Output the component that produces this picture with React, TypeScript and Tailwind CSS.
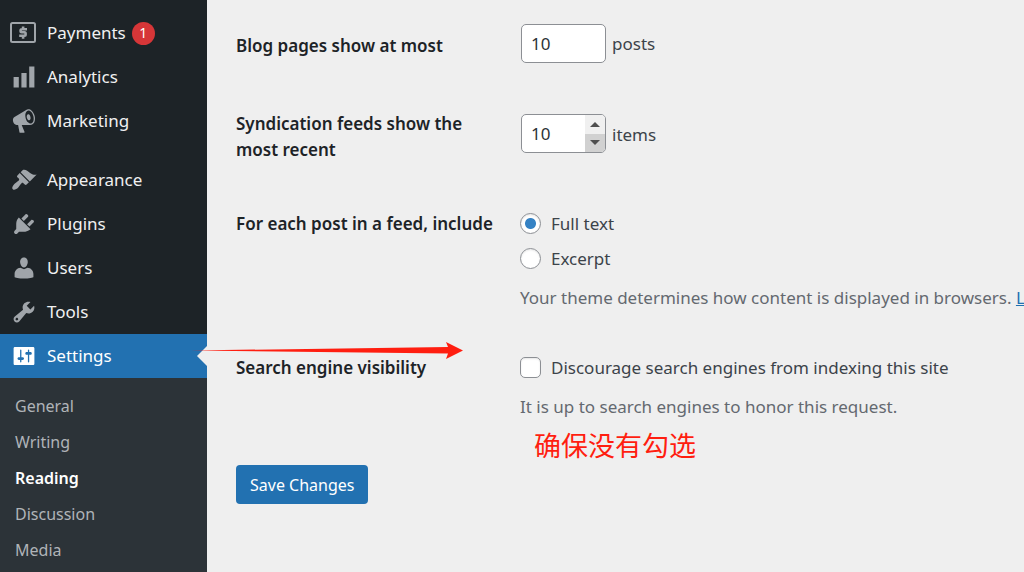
import { useState } from "react";
import type { ReactNode } from "react";

const ICONS = {
  analytics: "M18 18V2h-4v16h4zm-6 0V7H8v11h4zm-6 0v-8H2v8h4z",
  marketing:
    "M18.15 5.94c.46 1.62.38 3.22-.02 4.48-.42 1.28-1.26 2.18-2.3 2.48-.16.06-.26.06-.4.06-.06.02-.12.02-.18.02-.06.02-.14.02-.22.02h-6.8l2.22 5.5c.02.14-.06.26-.14.34-.08.1-.24.16-.34.16H6.95c-.1 0-.26-.06-.34-.16-.08-.08-.16-.2-.14-.34l-1-5.5H4.25l-.02-.02c-.5.06-1.08-.18-1.54-.62s-.88-1.08-1.06-1.88c-.24-.8-.2-1.56-.02-2.2.18-.62.58-1.08 1.06-1.3l.02-.02 9-5.4c.1-.06.18-.1.24-.16.06-.04.14-.08.24-.12.16-.08.28-.12.5-.18 1.04-.3 2.24.1 3.22.98s1.84 2.24 2.26 3.86zm-2.58 5.98h-.02c.4-.1.74-.34 1.04-.7.58-.7.86-1.76.86-3.04 0-.64-.1-1.3-.28-1.98-.34-1.36-1.02-2.5-1.78-3.24s-1.68-1.1-2.46-.88c-.82.22-1.4.96-1.7 2-.32 1.04-.28 2.36.06 3.72.38 1.36 1 2.5 1.8 3.24.78.74 1.62 1.1 2.48.88zm-2.54-7.08c.22-.04.42-.02.62.04.38.16.76.48 1.02 1s.42 1.2.42 1.78c0 .3-.04.56-.12.8-.18.48-.44.84-.86.94-.34.1-.8-.06-1.14-.4s-.64-.86-.78-1.5c-.18-.62-.12-1.24.02-1.72s.48-.84.82-.94z",
  appearance:
    "M14.48 11.06L7.41 3.99l1.5-1.5c.5-.56 2.3-.47 3.51.32 1.21.8 1.43 1.28 2.91 2.1 1.18.64 2.45 1.26 4.45.85zm-.71.71L6.7 4.7 4.93 6.47c-.39.39-.39 1.02 0 1.41l1.06 1.06c.39.39.39 1.03 0 1.42-.6.6-1.43 1.11-2.21 1.69-.35.26-.7.53-1.01.84C1.43 14.23.4 16.08 1.4 17.07c.99 1 2.84-.03 4.18-1.36.31-.31.58-.66.85-1.02.57-.78 1.08-1.61 1.69-2.21.39-.39 1.02-.39 1.41 0l1.06 1.06c.39.39 1.02.39 1.41 0z",
  plugins:
    "M13.11 4.36L9.87 7.6 8 5.73l3.24-3.24c.35-.34 1.05-.2 1.56.32.52.51.66 1.21.31 1.55zm-8 1.77l.91-1.12 9.01 9.01-1.19.84c-.71.71-2.63 1.16-3.82 1.16H6.14L4.9 17.26c-.59.59-1.54.59-2.12 0-.59-.58-.59-1.53 0-2.12l1.24-1.24v-3.88c0-1.13.4-3.19 1.09-3.89zm7.26 3.97l3.24-3.24c.34-.35 1.04-.21 1.55.31.52.51.66 1.21.31 1.55l-3.24 3.25z",
  users:
    "M10 9.700c-2.270 0-2.930-3.700-2.930-3.700C6.800 4.020 7.700 2 9.970 2c2.260 0 3.180 2.020 2.910 4 0 0-.61 3.700-2.880 3.700zm0 1.300L12.720 9.800c2.390 0 4.520 2.330 4.520 4.730v2.490s-3.650 1.130-7.240 1.130c-3.650 0-7.240-1.130-7.240-1.130v-2.490c0-2.250 1.940-4.730 4.470-4.730z",
  tools:
    "M16.68 9.77c-1.34 1.34-3.3 1.67-4.95.99l-5.41 6.52c-.99.99-2.59.99-3.58 0s-.99-2.59 0-3.57l6.52-5.42c-.68-1.65-.35-3.61.99-4.95 1.28-1.28 3.12-1.62 4.72-1.06l-2.89 2.89 2.82 2.82 2.86-2.87c.53 1.58.18 3.39-1.08 4.65zM3.81 16.21c.4.39 1.04.39 1.43 0 .4-.4.4-1.04 0-1.43-.39-.4-1.03-.4-1.43 0-.39.39-.39 1.03 0 1.43z",
  settings:
    "M18 16V4c0-.55-.45-1-1-1H3c-.55 0-1 .45-1 1v12c0 .55.45 1 1 1h14c.55 0 1-.45 1-1zM8 11h1c.55 0 1 .45 1 1s-.45 1-1 1H8v1.5c0 .28-.22.5-.5.5s-.5-.22-.5-.5V13H6c-.55 0-1-.45-1-1s.45-1 1-1h1V5.5c0-.28.22-.5.5-.5s.5.22.5.5V11zm5-2h-1c-.55 0-1-.45-1-1s.45-1 1-1h1V5.5c0-.28.22-.5.5-.5s.5.22.5.5V7h1c.55 0 1 .45 1 1s-.45 1-1 1h-1v5.5c0 .28-.22.5-.5.5s-.5-.22-.5-.5V9z",
};

function Icon({ name }: { name: keyof typeof ICONS }) {
  return (
    <svg viewBox="0 0 20 20" className="size-[26px] shrink-0" fill="currentColor" aria-hidden="true">
      <path d={ICONS[name]} />
    </svg>
  );
}

function PaymentsIcon() {
  return (
    <svg viewBox="1 0 26 26" className="size-[26px] shrink-0 overflow-visible" fill="none" stroke="currentColor" aria-hidden="true">
      <rect x="1" y="3" width="24" height="19" rx="1.5" strokeWidth="2" />
      <path d="M17 9.200h-5.200a1.200 1.200 0 0 0-1.200 1.200v.7a1.200 1.200 0 0 0 1.200 1.200h2.600a1.200 1.200 0 0 1 1.200 1.200v1a1.200 1.200 0 0 1-1.200 1.200H9.200M13.100 6.400v2.500M13.100 16v2.700" strokeWidth="2.600" />
    </svg>
  );
}

function MenuItem({ icon, label, active, badge }: { icon: ReactNode; label: string; active?: boolean; badge?: string }) {
  return (
    <li>
      <a
        href="#"
        aria-current={active ? "true" : undefined}
        className={
          active
            ? "relative flex h-11 items-center gap-[10px] bg-[#2271b1] pl-[11px] text-white"
            : "flex h-11 items-center gap-[10px] pl-[11px] text-[#f0f0f1]"
        }
      >
        <span className={active ? "text-white" : "text-[#a0a5aa]"}>{icon}</span>
        <span>{label}</span>
        {badge && (
          <span className="-ml-1 flex size-[23px] items-center justify-center rounded-full bg-[#d63638] text-sm text-white">
            {badge}
          </span>
        )}
        {active && (
          <svg viewBox="0 0 10 20" className="absolute top-3 right-0 h-5 w-[10px]" aria-hidden="true">
            <path d="M10 0v20L0 10z" fill="#efefef" />
          </svg>
        )}
      </a>
    </li>
  );
}

function Sidebar() {
  const pages = ["General", "Writing", "Reading", "Discussion", "Media"];
  return (
    <nav aria-label="Main menu" className="flex w-[207px] shrink-0 flex-col bg-[#1d2327] pt-[11px]">
      <ul>
        <MenuItem icon={<PaymentsIcon />} label="Payments" badge="1" />
        <MenuItem icon={<Icon name="analytics" />} label="Analytics" />
        <MenuItem icon={<Icon name="marketing" />} label="Marketing" />
      </ul>
      <ul className="mt-[15px]">
        <MenuItem icon={<Icon name="appearance" />} label="Appearance" />
        <MenuItem icon={<Icon name="plugins" />} label="Plugins" />
        <MenuItem icon={<Icon name="users" />} label="Users" />
        <MenuItem icon={<Icon name="tools" />} label="Tools" />
        <MenuItem icon={<Icon name="settings" />} label="Settings" active />
      </ul>
      <ul className="flex-1 bg-[#2c3338] pt-[10px] text-base">
        {pages.map((page) => (
          <li key={page}>
            <a
              href="#"
              className={
                page === "Reading"
                  ? "flex h-9 items-center pl-[15px] font-semibold text-white"
                  : "flex h-9 items-center pl-[15px] text-[#b0b4b8]"
              }
            >
              {page}
            </a>
          </li>
        ))}
      </ul>
    </nav>
  );
}

function NumberField({ id, spinner }: { id: string; spinner?: boolean }) {
  const [value, setValue] = useState(10);
  return (
    <span className="flex h-[39px] w-[85px] overflow-hidden rounded-[5px] border border-[#8c8f94] bg-white">
      <input
        id={id}
        type="number"
        value={value}
        onChange={(e) => setValue(Number(e.target.value))}
        className="w-0 min-w-0 flex-1 appearance-none bg-transparent pl-[9px] text-[#2c3338] outline-none [appearance:textfield] [&::-webkit-inner-spin-button]:appearance-none"
      />
      {spinner && (
        <span className="flex w-5 flex-col">
          <button type="button" aria-label="Increase" onClick={() => setValue(value + 1)} className="flex flex-1 items-center justify-center bg-[#f0f0f0]">
            <svg viewBox="0 0 10 5" className="h-[5px] w-[10px]" aria-hidden="true">
              <path d="M0 5 5 0l5 5z" fill="#4f4f4f" />
            </svg>
          </button>
          <button type="button" aria-label="Decrease" onClick={() => setValue(value - 1)} className="flex flex-1 items-center justify-center bg-[#d1d1d1]">
            <svg viewBox="0 0 10 5" className="h-[5px] w-[10px]" aria-hidden="true">
              <path d="M0 0h10L5 5z" fill="#4f4f4f" />
            </svg>
          </button>
        </span>
      )}
    </span>
  );
}

function RadioOption({ label, defaultChecked }: { label: string; defaultChecked?: boolean }) {
  return (
    <label className="flex h-[35px] items-center gap-[10px]">
      <input
        type="radio"
        name="feed"
        defaultChecked={defaultChecked}
        className="size-[21px] appearance-none rounded-full border border-[#8c8f94] bg-white shadow-[inset_0_1px_2px_rgba(0,0,0,0.1)] checked:bg-[radial-gradient(circle,#3582c4_5px,transparent_6px)]"
      />
      {label}
    </label>
  );
}

export default function App() {
  return (
    <div className="flex min-h-screen bg-[#efefef] font-['Noto_Sans','Noto_Sans_CJK_SC',sans-serif] text-[17px] leading-[26px] text-[#3c434a]">
      <Sidebar />
      <main className="min-w-0 flex-1 overflow-hidden">
        <form className="pt-6 pl-[29px]" onSubmit={(e) => e.preventDefault()}>
          <div className="grid grid-cols-[285px_1fr] gap-y-[51px] whitespace-nowrap">
            <label htmlFor="posts" className="pt-[9px] font-semibold text-[#1d2327]">
              Blog pages show at most
            </label>
            <div className="flex items-center gap-[6px]">
              <NumberField id="posts" />
              <span>posts</span>
            </div>

            <label htmlFor="items" className="-mt-[3px] font-semibold text-[#1d2327]">
              <span className="block">Syndication feeds show the</span>
              <span className="block">most recent</span>
            </label>
            <div className="flex items-start gap-[6px]">
              <NumberField id="items" spinner />
              <label htmlFor="items" className="pt-2">
                items
              </label>
            </div>
          </div>

          <div className="mt-[43px] grid grid-cols-[284px_1fr] gap-y-[39px] whitespace-nowrap">
            <div className="pt-[5px] font-semibold text-[#1d2327]">For each post in a feed, include</div>
            <fieldset>
              <RadioOption label="Full text" defaultChecked />
              <RadioOption label="Excerpt" />
              <p className="mt-[9px] text-[#646970]">
                Your theme determines how content is displayed in browsers.{" "}
                <a href="#" className="text-[#2271b1] underline">
                  Learn more
                </a>
                .
              </p>
            </fieldset>

            <div className="pt-[5px] font-semibold text-[#1d2327]">Search engine visibility</div>
            <div>
              <label className="flex h-[35px] items-center gap-[10px]">
                <input
                  type="checkbox"
                  className="size-[21px] appearance-none rounded-[5px] border border-[#8c8f94] bg-white shadow-[inset_0_1px_2px_rgba(0,0,0,0.1)] checked:bg-[#3582c4]"
                />
                Discourage search engines from indexing this site
              </label>
              <p className="mt-[9px] text-[#646970]">It is up to search engines to honor this request.</p>
              <p className="mt-[9px] ml-[14px] text-[27px] leading-[34px] text-[#ff1e10]">确保没有勾选</p>
            </div>
          </div>

          <button type="submit" className="mt-[2px] h-[39px] rounded bg-[#2271b1] px-[14px] text-base text-white">
            Save Changes
          </button>
        </form>
      </main>
      <svg viewBox="0 0 272 18" className="pointer-events-none absolute top-[341px] left-[191px] h-[18px] w-[272px]" aria-hidden="true">
        <path d="M0 9.500 257 6 255 1 272 9.500 255 18l2-5.500z" fill="#ff1e10" />
      </svg>
    </div>
  );
}
